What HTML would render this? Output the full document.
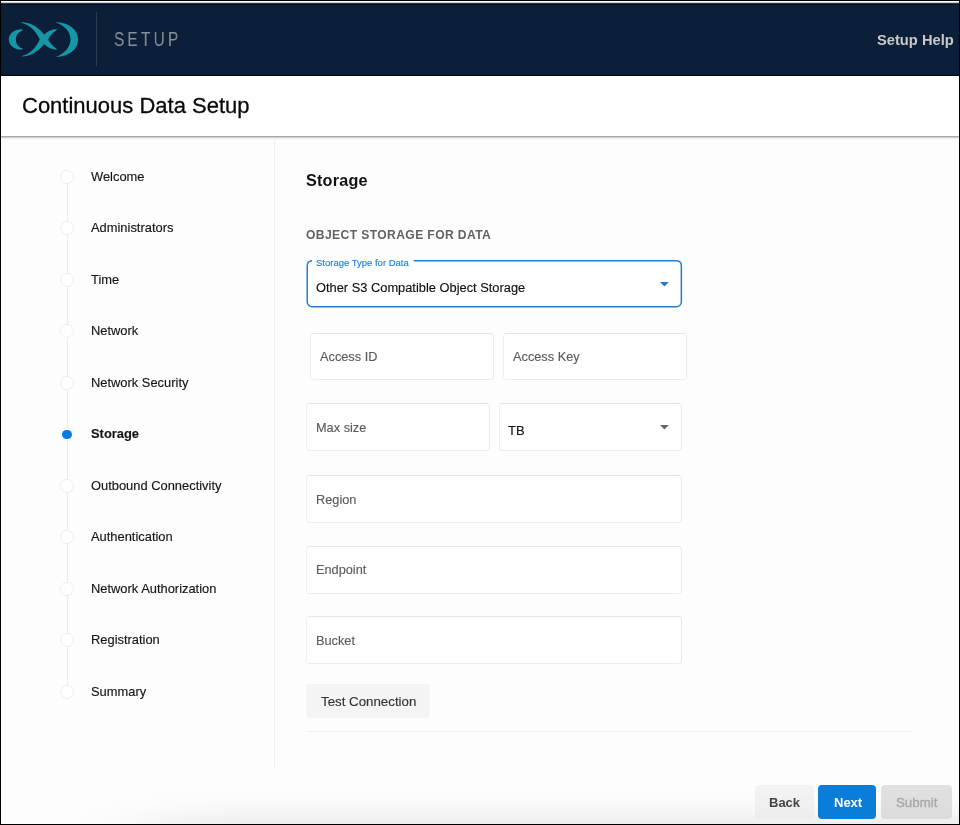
<!DOCTYPE html>
<html><head><meta charset="utf-8">
<style>
*{box-sizing:border-box;margin:0;padding:0}
html,body{width:960px;height:825px;overflow:hidden;background:#fff}
body{position:relative;font-family:"Liberation Sans",sans-serif;color:#222;-webkit-text-stroke:0.15px currentColor}
.a{position:absolute;white-space:nowrap;will-change:transform}
#hdr{left:0;top:4px;width:960px;height:72px;background:linear-gradient(#0b1f39 0,#0b1f39 69px,#081a34 69px,#081a34 70px);border-top:1px solid #011030;border-bottom:1px solid #04050f}
#hdr2{left:0;top:2px;width:960px;height:2px;background:linear-gradient(#c6cacf 0,#c6cacf 1px,#2c3547 1px,#2c3547 2px)}
#topw{left:0;top:0;width:960px;height:3px;background:#fff}
.bd{background:#000}
#title{left:22px;top:92.8px;font-size:22px;color:#0a0a0a;-webkit-text-stroke:0.3px #0a0a0a}
#tline{left:0;top:136px;width:960px;height:1px;background:#a7a7a7}
#tsh{left:0;top:137px;width:960px;height:3px;background:linear-gradient(#d2d2d2 0,#d2d2d2 1px,#eeeeee 1px,#eeeeee 2px,#f9f9f9 2px,#f9f9f9 3px)}
#side{left:274px;top:140px;width:1px;height:628px;background:#f0f0f0}
.step{left:90.5px;font-size:12.9px;color:#151515}
.dot{left:60px;width:14px;height:14px;border-radius:50%;border:1px solid #ececec;background:#fff}
.vl{left:67px;width:1px;background:#ececec}
.fld{border:1px solid;border-color:#e5e5e5 #eaeaea #ededed #f0f0f0;border-radius:4px;background:#fff}
.ph{font-size:12.75px;color:#5c5c5c}
</style></head><body>
<div id="topw" class="a"></div>
<div id="hdr" class="a"></div>
<div id="hdr2" class="a"></div>
<svg class="a" style="left:0;top:0" width="100" height="76" viewBox="0 0 100 76">
 <g fill="#1597a8">
  <path d="M22.1,29.2 C14,29.2 8.8,34 8.8,39.45 C8.8,44.9 14,49.7 22.1,49.7 L22.5,48.5 C18,47 15.9,43.5 15.9,39.45 C15.9,35.4 18,31.9 22.5,30.4 Z"/>
  <path d="M55.1,22.3 C69,22.3 78.1,30 78.1,39.6 C78.1,49.2 69,56.9 55.8,56.9 C65,53.5 70.5,47 70.5,39.6 C70.5,32 65,25.5 55.1,22.3 Z"/>
  <path d="M20.9,22.4 C28,22 36,25 44.2,34.5 C48,31 52,29.2 56.8,29.0 L56.4,30.3 C53,32.5 50,36 48.1,39.4 C50,42.8 53,46.3 56.4,48.5 L56.8,49.8 C52,49.6 48,47.8 44.2,44.3 C36,53.8 28,56.8 20.9,56.4 C30,53.8 36,47.8 39.8,39.4 C36,31 30,25 20.9,22.4 Z"/>
 </g>
 <rect x="96" y="12" width="1" height="54" fill="#2e3c52"/>
</svg>
<div class="a" style="left:114px;top:28.6px;font-size:19.3px;letter-spacing:4px;color:#8a9099;-webkit-text-stroke:0;transform:scaleX(0.8);transform-origin:0 0">SETUP</div>
<div class="a" style="left:877.2px;top:31.6px;font-size:14.7px;font-weight:bold;-webkit-text-stroke:0;color:#c9c9c9">Setup Help</div>

<div id="title" class="a">Continuous Data Setup</div>
<div class="a" style="left:0;top:137px;width:960px;height:688px;background:#fdfdfd"></div>
<div id="tline" class="a"></div>
<div id="tsh" class="a"></div>
<div id="side" class="a"></div>
<div class="a vl" style="top:176.70px;height:515.30px"></div>
<div class="a dot" style="top:169.70px"></div>
<div class="a step" style="top:168.70px">Welcome</div>
<div class="a dot" style="top:221.23px"></div>
<div class="a step" style="top:220.23px">Administrators</div>
<div class="a dot" style="top:272.76px"></div>
<div class="a step" style="top:271.76px">Time</div>
<div class="a dot" style="top:324.29px"></div>
<div class="a step" style="top:323.29px">Network</div>
<div class="a dot" style="top:375.82px"></div>
<div class="a step" style="top:374.82px">Network Security</div>
<div class="a dot" style="top:427.35px;border-color:#f0f0f0"><div style="position:absolute;left:1.2px;top:1.7px;width:9.6px;height:9.6px;border-radius:50%;background:#0a7bd9"></div></div>
<div class="a step" style="top:426.35px;font-weight:bold">Storage</div>
<div class="a dot" style="top:478.88px"></div>
<div class="a step" style="top:477.88px">Outbound Connectivity</div>
<div class="a dot" style="top:530.41px"></div>
<div class="a step" style="top:529.41px">Authentication</div>
<div class="a dot" style="top:581.94px"></div>
<div class="a step" style="top:580.94px">Network Authorization</div>
<div class="a dot" style="top:633.47px"></div>
<div class="a step" style="top:632.47px">Registration</div>
<div class="a dot" style="top:685.00px"></div>
<div class="a step" style="top:684.00px">Summary</div>

<div class="a" style="left:306.2px;top:170.5px;font-size:16.2px;font-weight:bold;-webkit-text-stroke:0;color:#111;letter-spacing:0.2px">Storage</div>
<div class="a" style="left:306.3px;top:228.3px;font-size:12.1px;font-weight:bold;-webkit-text-stroke:0;color:#626262;letter-spacing:0.4px">OBJECT STORAGE FOR DATA</div>

<div class="a fld" style="left:310px;top:333px;width:184px;height:47px"></div>
<div class="a ph" style="left:320.2px;top:349.3px">Access ID</div>
<div class="a fld" style="left:503px;top:333px;width:184px;height:47px"></div>
<div class="a ph" style="left:513.2px;top:349.3px">Access Key</div>

<div class="a fld" style="left:306px;top:403px;width:184px;height:48px"></div>
<div class="a ph" style="left:316px;top:420px">Max size</div>
<div class="a fld" style="left:499px;top:403px;width:183px;height:48px"></div>
<div class="a" style="left:508px;top:423px;font-size:13px;color:#111">TB</div>

<div class="a fld" style="left:306px;top:475px;width:376px;height:48px"></div>
<div class="a ph" style="left:316.3px;top:492.3px">Region</div>
<div class="a fld" style="left:306px;top:546px;width:376px;height:48px"></div>
<div class="a ph" style="left:316.3px;top:562.4px">Endpoint</div>
<div class="a fld" style="left:306px;top:616px;width:376px;height:48px"></div>
<div class="a ph" style="left:316.3px;top:632.9px">Bucket</div>

<svg class="a" style="left:0;top:0" width="960" height="825">
 <rect x="307.25" y="260.85" width="374.1" height="45.9" rx="5" fill="#fff"/>
 <path d="M311,260.85 H312 M413.8,260.85 H677.1 A5,5 0 0 1 681.35,265.85 V301.85 A5,5 0 0 1 676.35,306.75 H312.25 A5,5 0 0 1 307.25,301.75 V265.85 A5,5 0 0 1 311.5,260.85" fill="none" stroke="#1f7fd6" stroke-width="1.5"/>
 <path d="M660,282 H668.8 L664.4,286.5 Z" fill="#1a7ad4"/>
 <path d="M660,424.9 H668.8 L664.4,429.6 Z" fill="#666"/>
</svg>
<div class="a" style="left:315.6px;top:257.2px;font-size:9.5px;color:#1f7fd6">Storage Type for Data</div>
<div class="a" style="left:315.5px;top:280.3px;font-size:12.85px;color:#111">Other S3 Compatible Object Storage</div>
<div class="a" style="left:306px;top:684px;width:124.2px;height:34.3px;background:#f4f4f4;border-radius:4px"></div>
<div class="a" style="left:321px;top:694.4px;font-size:13.3px;color:#333">Test Connection</div>
<div class="a" style="left:306px;top:731px;width:607px;height:1px;background:#f1f1f1"></div>

<svg class="a" style="left:0;top:700px" width="960" height="125"><defs><filter id="sh" x="-50%" y="-300%" width="200%" height="700%"><feGaussianBlur stdDeviation="45 18"/></filter></defs><rect x="150" y="126" width="1000" height="60" fill="rgba(0,0,0,0.13)" filter="url(#sh)"/></svg>
<div class="a" style="left:755px;top:785px;width:58.5px;height:34px;background:linear-gradient(#f4f4f4,#ededed);border-radius:4px"></div>
<div class="a" style="left:769.3px;top:795px;font-size:13px;font-weight:bold;-webkit-text-stroke:0;color:#444">Back</div>
<div class="a" style="left:818.3px;top:785px;width:57.7px;height:34px;background:#0b7dd8;border-radius:4px"></div>
<div class="a" style="left:834px;top:795px;font-size:13px;font-weight:bold;-webkit-text-stroke:0;color:#fff">Next</div>
<div class="a" style="left:880.8px;top:785px;width:71px;height:34px;background:linear-gradient(#e1e1e1,#dbdbdb);border-radius:4px"></div>
<div class="a" style="left:895.6px;top:794.8px;font-size:13.3px;color:#a8a8a8;-webkit-text-stroke:0.35px #a8a8a8">Submit</div>

<div class="a bd" style="left:0;top:0;width:960px;height:1px"></div>
<div class="a bd" style="left:0;top:0;width:1px;height:825px"></div>
<div class="a bd" style="left:959px;top:0;width:1px;height:825px"></div>
<div class="a bd" style="left:0;top:824px;width:960px;height:1px"></div>
</body></html>
